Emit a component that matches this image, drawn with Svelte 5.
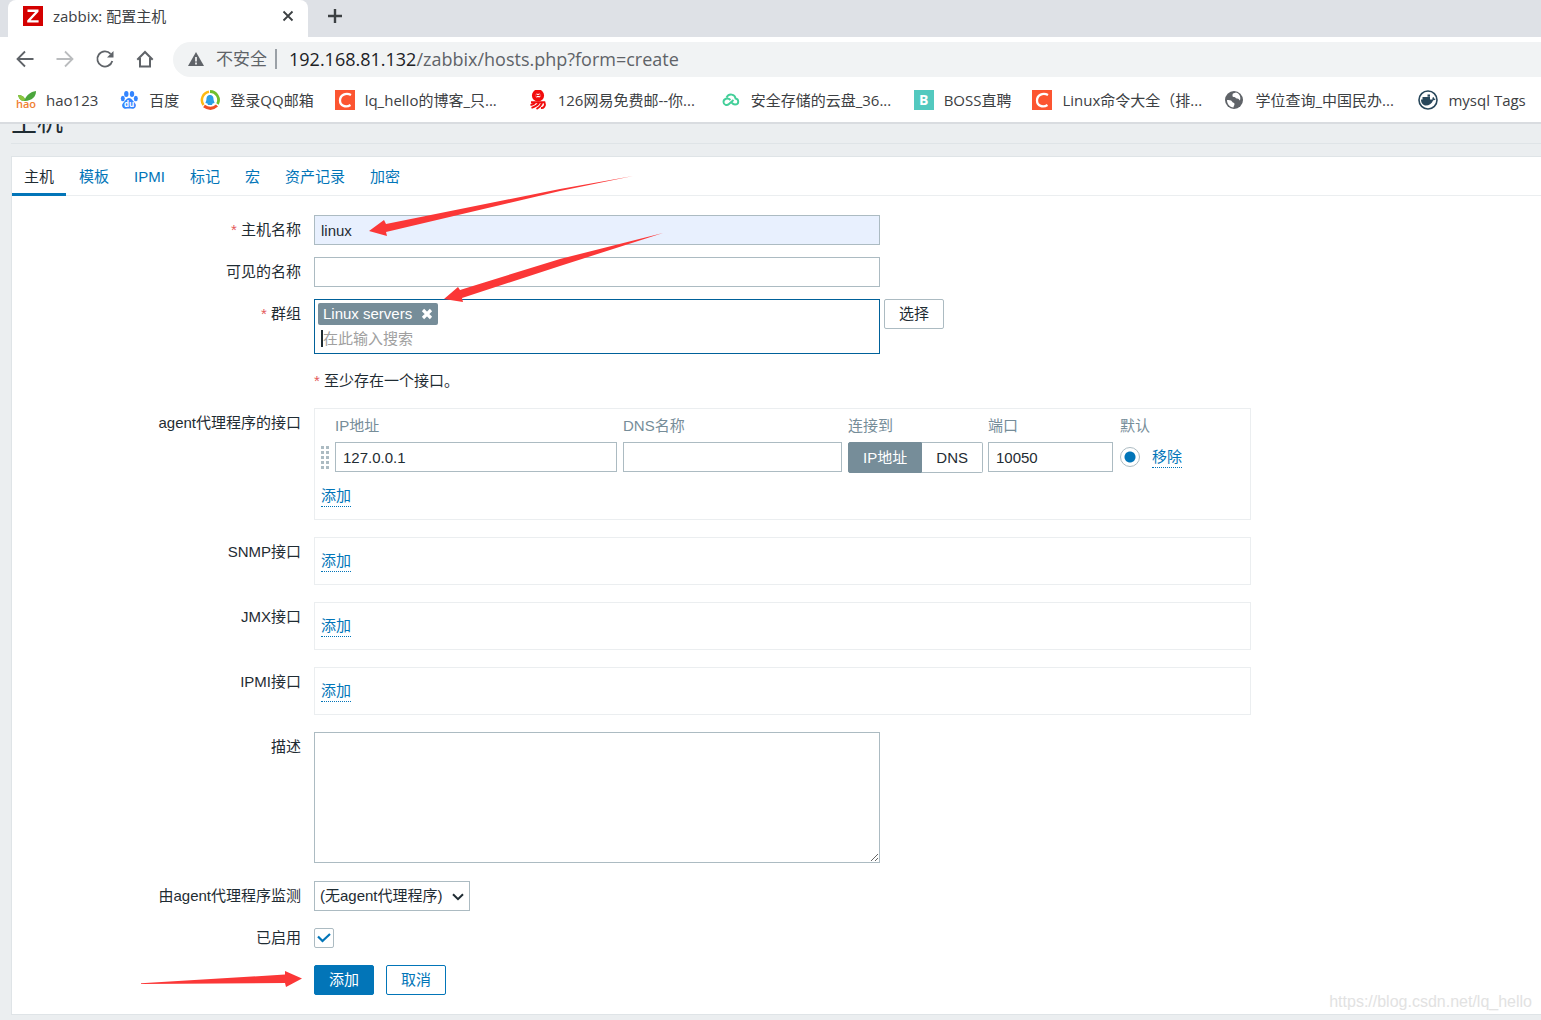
<script>
	const tabs = ['主机', '模板', 'IPMI', '标记', '宏', '资产记录', '加密']
	let activeTab = '主机'

	const bookmarks = [
		{icon: 'hao', title: 'hao123'},
		{icon: 'baidu', title: '百度'},
		{icon: 'qq', title: '登录QQ邮箱'},
		{icon: 'csdn', title: 'lq_hello的博客_只...', long: true},
		{icon: 'netease', title: '126网易免费邮--你...', long: true},
		{icon: 'cloud', title: '安全存储的云盘_36...', long: true},
		{icon: 'boss', title: 'BOSS直聘'},
		{icon: 'csdn', title: 'Linux命令大全（排...', long: true},
		{icon: 'globe', title: '学位查询_中国民办...', long: true},
		{icon: 'docker', title: 'mysql Tags'}
	]

	const otherInterfaces = ['SNMP接口', 'JMX接口', 'IPMI接口']

	let hostName = 'linux'
	let visibleName = ''
	let groups = ['Linux servers']
	let search = ''
	let ip = '127.0.0.1'
	let dns = ''
	let useIp = true
	let port = '10050'
	let description = ''
	let enabled = true

	const removeGroup = (group) =>
		groups = groups.filter((g) => g !== group)
</script>

<header class="browser">
	<div class="tab-strip">
		<div class="browser-tab">
			<svg width="20" height="20" viewBox="0 0 20 20">
				<rect width="20" height="20" fill="#d40000"/>
				<path d="M4.5 3.5h11v2.2L7.6 14.2h8v2.4H4.2v-2.2l7.9-8.5H4.5z" fill="#fff"/>
			</svg>
			<span class="tab-title">zabbix: 配置主机</span>
			<button class="plain" aria-label="关闭标签页">
				<svg width="12" height="12" viewBox="0 0 12 12"><path d="M1.5 1.5l9 9M10.5 1.5l-9 9" stroke="#3c4043" stroke-width="1.800"/></svg>
			</button>
		</div>
		<button class="plain new-tab" aria-label="新标签页">
			<svg width="16" height="16" viewBox="0 0 16 16"><path d="M8 1v14M1 8h14" stroke="#3c4043" stroke-width="2.4"/></svg>
		</button>
	</div>

	<div class="toolbar">
		<button class="plain" aria-label="后退">
			<svg width="20" height="20" viewBox="0 0 20 20"><path d="M18.500 10H3M10 2.500L2.500 10l7.500 7.500" fill="none" stroke="#5f6368" stroke-width="1.800"/></svg>
		</button>
		<button class="plain" aria-label="前进">
			<svg width="20" height="20" viewBox="0 0 20 20"><path d="M1.500 10H17M10 2.500l7.500 7.500-7.500 7.500" fill="none" stroke="#babcbe" stroke-width="1.800"/></svg>
		</button>
		<button class="plain" aria-label="重新加载">
			<svg width="20" height="20" viewBox="0 0 20 20">
				<path d="M17.300 12A7.600 7.600 0 1 1 15.600 4.800" fill="none" stroke="#5f6368" stroke-width="1.800"/>
				<path d="M18.500 2v6.500h-6.500z" fill="#5f6368"/>
			</svg>
		</button>
		<button class="plain" aria-label="主页">
			<svg width="20" height="20" viewBox="0 0 20 20"><path d="M2.300 10.800L10 3l7.700 7.800M5 9v8.600h10V9" fill="none" stroke="#5f6368" stroke-width="2"/></svg>
		</button>
		<div class="address">
			<svg width="16" height="16" viewBox="0 0 16 16">
				<path d="M8 1l8 14H0z" fill="#5f6368"/>
				<path d="M8 6v4.500M8 11.500v2" stroke="#fff" stroke-width="1.600"/>
			</svg>
			<span class="insecure">不安全</span>
			<span class="url"><b>192.168.81.132</b>/zabbix/hosts.php?form=create</span>
		</div>
	</div>

	<nav class="bookmarks">
		{#each bookmarks as bookmark}
			<a href="#bookmark" class:long={bookmark.long}>
				<svg width="20" height="20" viewBox="0 0 20 20">
					{#if bookmark.icon === 'hao'}
						<path d="M2 5c4 0 6 2 7 4C11 5 14 2 20 1c0 6-4 9.500-11 10C5 11 3 9 2 5z" fill="#4ba63c"/>
						<path d="M2 5c4 0 6 2 7 4l-1 2C5 11 3 9 2 5z" fill="#8cc63f"/>
						<text x="0" y="18" font-size="11" font-weight="600" fill="#f08031">hao</text>
					{:else if bookmark.icon === 'baidu'}
						<g fill="#3385ff">
							<ellipse cx="7.300" cy="4" rx="2.200" ry="3"/>
							<ellipse cx="13" cy="4" rx="2.200" ry="3"/>
							<ellipse cx="3.800" cy="8.500" rx="2" ry="2.700"/>
							<ellipse cx="16.800" cy="8.500" rx="2" ry="2.700"/>
							<path d="M10 8c2.500 0 3.500 2.500 5 4s2.500 3 1.500 5c-1 2.500-4 1.500-6.500 1.500S4.500 19.500 3.500 17c-1-2 0-3.500 1.500-5s2.500-4 5-4z"/>
						</g>
						<text x="5" y="17" font-size="8" font-weight="bold" fill="#fff">du</text>
					{:else if bookmark.icon === 'qq'}
						<circle cx="10" cy="10" r="9" fill="#fff"/>
						<path d="M3.500 15A8.400 8.400 0 0 1 9 1.800" fill="none" stroke="#fdb913" stroke-width="2.500"/>
						<path d="M10 1.500A8.500 8.500 0 0 1 17.500 14" fill="none" stroke="#70bf2b" stroke-width="2.800"/>
						<path d="M17 15.500Q11 21 4 16" fill="none" stroke="#f04e23" stroke-width="3"/>
						<path d="M10 5c3 0 3.600 2.500 3.600 5l1 3-2 .5-.6 1.500H8l-.6-1.500-2-.5 1-3C6.400 7.500 7 5 10 5z" fill="#2a9fe5"/>
					{:else if bookmark.icon === 'csdn'}
						<rect width="20" height="20" fill="#fc5531"/>
						<path d="M16 5C11 2.300 5 4.800 5 10.500c0 5.500 6 7.300 10.500 4.500" fill="none" stroke="#fff" stroke-width="2.300"/>
					{:else if bookmark.icon === 'netease'}
						<g fill="none" stroke="#f20d0d">
							<circle cx="10" cy="5.500" r="4.300" stroke-width="3.600"/>
							<path d="M7.800 5.500h4.400c0-2.600-4.400-2.600-4.400 0s2.700 2.200 4 1.700" stroke-width="1"/>
							<path d="M3 12.300h13.500c1.500 3.500-1 6-3.500 5.700M7.500 12c-1 1.800-3 2.800-5 3M11 13c-1.500 2.500-4 3.800-7.500 4.800M14 13c-1 3-3 4.500-5.500 6" stroke-width="1.900"/>
						</g>
					{:else if bookmark.icon === 'cloud'}
						<path d="M9.500 10C6.500 7 2.500 9 2.500 12s3.500 4 5.500 2L12.500 10M5.500 7.500C8 3 14 4 14.500 8.500c3.500.5 4 6-.5 6-2 0-3-1.500-4.500-3" fill="none" stroke="#43cf99" stroke-width="1.900"/>
					{:else if bookmark.icon === 'boss'}
						<rect width="20" height="20" fill="#53c9bf"/>
						<text x="5" y="15" font-size="14" font-weight="bold" fill="#fff">B</text>
					{:else if bookmark.icon === 'globe'}
						<circle cx="9" cy="10" r="9" fill="#5f6368"/>
						<path d="M8 3.500l3-1c4 1 5 5 4 8-1-.5-1-2-3-2s-1-2-3.500-1.500C7 7 7.500 4 8 3.500zM2 10c2 .3 4-.2 5 1.500s2.500 1 2.500 2.500-1 2-1 3.500C4.500 17 2 14 2 10z" fill="#fff"/>
					{:else}
						<circle cx="10" cy="10" r="9" fill="#fff" stroke="#28475b" stroke-width="1.600"/>
						<path d="M3 9.500h11.500c-.3-1 0-2 .6-2.500.8.4 1.100 1 1.200 1.700.6 0 1 .1 1.400.4-.5.9-1.400 1.200-2.500 1.200C13.500 14 11 15.500 8 15.500S3 13 3 9.500zM4.500 7h2.500v3H4.500zM7 7h2.500v3H7zM9.500 7H12v3H9.500zM9.500 4.500H12v2.200H9.500z" fill="#28475b"/>
					{/if}
				</svg>
				<span>{bookmark.title}</span>
			</a>
		{/each}
	</nav>
</header>

<main>
	<div class="page-title"><h1>主机</h1></div>

	<div class="card">
		<nav class="tabs">
			{#each tabs as tab}
				<a href="#{tab}" class:active={tab === activeTab} on:click={() => activeTab = tab}>{tab}</a>
			{/each}
		</nav>

		<form on:submit|preventDefault>
			<div class="row">
				<label class="required" for="host">主机名称</label>
				<input id="host" class="text wide autofill" bind:value={hostName}/>
			</div>
			<div class="row">
				<label for="visible">可见的名称</label>
				<input id="visible" class="text wide" bind:value={visibleName}/>
			</div>
			<div class="row">
				<label class="required" for="groups">群组</label>
				<div class="with-button">
					<div class="multiselect wide">
						{#each groups as group}
							<span class="tag">
								{group}
								<button type="button" class="plain" aria-label="移除" on:click={() => removeGroup(group)}>
									<svg width="12" height="12" viewBox="0 0 12 12"><path d="M2 2l8 8M10 2l-8 8" stroke="#fff" stroke-width="3.200"/></svg>
								</button>
							</span>
						{/each}
						<input id="groups" placeholder="在此输入搜索" bind:value={search}/>
					</div>
					<button type="button" class="btn grey">选择</button>
				</div>
			</div>
			<div class="row">
				<p class="note required">至少存在一个接口。</p>
			</div>

			<div class="row loose">
				<span class="label">agent代理程序的接口</span>
				<div class="panel">
					<table>
						<thead>
							<tr>
								<th class="drag"></th>
								<th class="ip">IP地址</th>
								<th class="dns">DNS名称</th>
								<th class="connect">连接到</th>
								<th class="port">端口</th>
								<th>默认</th>
							</tr>
						</thead>
						<tbody>
							<tr>
								<td>
									<svg class="handle" width="8" height="24" viewBox="0 0 8 24" fill="#acbbc2">
										{#each [1, 6, 11, 16, 21] as y}
											<rect x="0" {y} width="3" height="3"/>
											<rect x="5" {y} width="3" height="3"/>
										{/each}
									</svg>
								</td>
								<td><input class="text" aria-label="IP地址" bind:value={ip}/></td>
								<td><input class="text" aria-label="DNS名称" bind:value={dns}/></td>
								<td>
									<div class="segmented">
										<button type="button" class:on={useIp} on:click={() => useIp = true}>IP地址</button>
										<button type="button" class:on={!useIp} on:click={() => useIp = false}>DNS</button>
									</div>
								</td>
								<td><input class="text" aria-label="端口" bind:value={port}/></td>
								<td>
									<div class="default">
										<input type="radio" name="default" aria-label="默认" checked/>
										<a class="dotted" href="#remove">移除</a>
									</div>
								</td>
							</tr>
						</tbody>
					</table>
					<div class="add"><a class="dotted" href="#add">添加</a></div>
				</div>
			</div>

			{#each otherInterfaces as name}
				<div class="row loose">
					<span class="label">{name}</span>
					<div class="panel">
						<div class="add"><a class="dotted" href="#add">添加</a></div>
					</div>
				</div>
			{/each}

			<div class="row loose tall">
				<label for="description">描述</label>
				<textarea id="description" class="wide" bind:value={description}></textarea>
			</div>
			<div class="row">
				<label for="proxy">由agent代理程序监测</label>
				<div class="select">
					<select id="proxy">
						<option>(无agent代理程序)</option>
					</select>
					<svg width="12" height="8" viewBox="0 0 12 8"><path d="M1 1.200l5 5 5-5" fill="none" stroke="#1f2c33" stroke-width="2"/></svg>
				</div>
			</div>
			<div class="row">
				<label for="enabled">已启用</label>
				<div class="check">
					<input id="enabled" type="checkbox" bind:checked={enabled}/>
					{#if enabled}
						<svg width="14" height="10" viewBox="0 0 14 10"><path d="M1 3.500L5.500 8 13 1" fill="none" stroke="#0275b8" stroke-width="2.200"/></svg>
					{/if}
				</div>
			</div>
			<div class="row">
				<div class="buttons">
					<button class="btn primary">添加</button>
					<button type="button" class="btn">取消</button>
				</div>
			</div>
		</form>
		<span class="watermark">https://blog.csdn.net/lq_hello</span>
	</div>
</main>

<svg class="arrows" width="700" height="1000" viewBox="0 0 700 1000" fill="#fb3737">
	<path d="M369 231L384 220l2 4L560 189l73-13-73 15-174 41 1 4z"/>
	<path d="M444 299l14-12 2 3 100-31 103-26-103 33-98 32 1 4z"/>
	<path d="M141 983.300L285 974.500V971l17 7.500-16 8.500-1-4-144 1z"/>
</svg>

<style>
	:global(body) {
		background: #ebeef0;
		color: #1f2c33;
		font: 15px/20px "Liberation Sans", "Noto Sans CJK SC", sans-serif;
	}

	a {
		color: #0275b8;
		text-decoration: none;
	}

	button, input, select, textarea {
		box-sizing: border-box;
		margin: 0;
		color: inherit;
		font: inherit;
	}

	.plain {
		display: flex;
		padding: 0;
		border: 0;
		background: none;
	}

	/* browser window */
	.browser {
		background: #fff;
		border-bottom: 2px solid #d9dce0;
		color: #3c4043;
		font-family: "Open Sans", "Noto Sans CJK SC", sans-serif;
	}

	.tab-strip {
		display: flex;
		align-items: center;
		height: 37px;
		padding-left: 8px;
		background: #dee1e6;
	}

	.browser-tab {
		display: flex;
		align-items: center;
		box-sizing: border-box;
		width: 300px;
		height: 37px;
		padding: 0 14px 5px 15px;
		background: #fff;
		border-radius: 8px 8px 0 0;
	}

	.tab-title {
		flex: 1;
		margin-left: 10px;
	}

	.new-tab {
		margin: 0 0 5px 19px;
	}

	.toolbar {
		display: flex;
		align-items: center;
		gap: 20px;
		height: 44px;
		padding-left: 15px;
	}

	.address {
		display: flex;
		flex: 1;
		align-items: center;
		height: 35px;
		margin-left: -2px;
		padding-left: 15px;
		background: #f1f3f4;
		border-radius: 18px 0 0 18px;
		font-size: 18px;
	}

	.insecure {
		margin-left: 12px;
		padding-right: 8px;
		border-right: 2px solid #9aa0a6;
		color: #5f6368;
		font-size: 17px;
	}

	.url {
		margin-left: 12px;
		color: #5f6368;
	}

	.url b {
		color: #202124;
		font-weight: normal;
	}

	.bookmarks {
		display: flex;
		align-items: center;
		gap: 21px;
		height: 38px;
		padding: 0 0 3px 16px;
		overflow: hidden;
	}

	.bookmarks a {
		display: flex;
		flex: none;
		align-items: center;
		gap: 10px;
		color: #3c4043;
		white-space: nowrap;
	}

	.bookmarks .long {
		width: 172px;
	}

	/* page */
	main {
		padding: 0 0 5px 11px;
	}

	.page-title {
		display: flex;
		align-items: flex-end;
		height: 19px;
		overflow: hidden;
		border-bottom: 1px solid #dfe4e7;
	}

	h1 {
		margin: 0 0 5px;
		font-size: 26px;
		font-weight: 400;
		line-height: 32px;
	}

	.card {
		position: relative;
		margin-top: 12px;
		background: #fff;
		border: 1px solid #dfe4e7;
		border-right: 0;
	}

	.tabs {
		display: flex;
		gap: 1px;
		border-bottom: 1px solid #ebeef0;
	}

	.tabs a {
		height: 28px;
		padding: 10px 12px 0;
	}

	.tabs .active {
		height: 26px;
		margin-bottom: -1px;
		border-bottom: 3px solid #0275b8;
		color: #1f2c33;
	}

	form {
		display: flex;
		flex-direction: column;
		gap: 12px;
		padding: 19px 0;
	}

	.row {
		display: grid;
		grid-template-columns: 289px minmax(0, 1fr);
		column-gap: 13px;
		min-height: 30px;
	}

	.loose {
		margin-bottom: 5px;
	}

	.tall {
		min-height: 132px;
	}

	.row > * {
		grid-column: 2;
	}

	.row > label, .label {
		grid-column: 1;
		line-height: 30px;
		text-align: right;
	}

	.required::before {
		content: "* ";
		color: #e45959;
	}

	.note {
		margin: 0;
		line-height: 30px;
	}

	.wide {
		width: 100%;
		max-width: 566px;
	}

	.text {
		height: 30px;
		padding: 0 6px;
		background: #fff;
		border: 1px solid #acbbc2;
		outline: none;
	}

	.autofill {
		background: #e8f0fe;
	}

	.with-button {
		display: flex;
		align-items: flex-start;
		gap: 4px;
	}

	.multiselect {
		box-sizing: border-box;
		height: 55px;
		padding: 3px;
		border: 1px solid #00619a;
	}

	.tag {
		display: flex;
		align-items: center;
		gap: 9px;
		width: max-content;
		height: 22px;
		padding: 0 5px;
		background: #768d99;
		border-radius: 2px;
		color: #fff;
	}

	.multiselect input {
		display: block;
		width: 90%;
		height: 17px;
		margin: 5px 0 0 3px;
		padding: 0;
		border: 0;
		border-left: 2px solid #1f2c33;
		line-height: 17px;
		outline: none;
	}

	.multiselect input::placeholder {
		color: #a0a0a0;
	}

	.btn {
		width: 60px;
		height: 30px;
		padding: 0;
		background: #fff;
		border: 1px solid #0275b8;
		border-radius: 2px;
		color: #0275b8;
	}

	.grey {
		border-color: #acbbc2;
		color: #1f2c33;
	}

	.primary {
		background: #0275b8;
		color: #fff;
	}

	.panel {
		box-sizing: border-box;
		max-width: 937px;
		padding: 0 6px;
		border: 1px solid #ebeef0;
	}

	table {
		width: 100%;
		padding-top: 5px;
		border-spacing: 0;
		table-layout: fixed;
	}

	th {
		padding: 0;
		color: #768d99;
		font-weight: normal;
		line-height: 24px;
		text-align: left;
	}

	td {
		height: 31px;
		padding: 4px 6px 0 0;
		vertical-align: top;
	}

	td .text {
		display: block;
		width: 100%;
		padding: 0 7px;
	}

	.drag {
		width: 14px;
	}

	.ip {
		width: 288px;
	}

	.dns {
		width: 225px;
	}

	.connect {
		width: 140px;
	}

	.port {
		width: 132px;
	}

	td:nth-child(4) {
		padding-right: 5px;
	}

	td:nth-child(5) {
		padding-right: 7px;
	}

	.handle {
		display: block;
		margin-top: 3px;
	}

	.segmented {
		display: flex;
		height: 31px;
	}

	.segmented button {
		flex: 1 0 auto;
		padding: 0 14px;
		background: #fff;
		border: 1px solid #acbbc2;
		border-left: 0;
		border-radius: 0 2px 2px 0;
	}

	.segmented button:first-child {
		border-left: 1px solid #acbbc2;
		border-radius: 2px 0 0 2px;
	}

	.segmented .on, .segmented .on:first-child {
		background: #768d99;
		border-color: #768d99;
		color: #fff;
	}

	.default {
		display: flex;
		align-items: center;
		gap: 12px;
		height: 30px;
	}

	input[type=radio] {
		width: 20px;
		height: 20px;
		appearance: none;
		background: radial-gradient(circle, #0275b8 5px, #fff 6px);
		border: 1px solid #acbbc2;
		border-radius: 50%;
	}

	.dotted {
		display: inline-block;
		border-bottom: 1px dotted #0275b8;
	}

	.add {
		display: flex;
		padding: 13px 0 12px;
	}

	textarea {
		height: 131px;
		border: 1px solid #acbbc2;
		outline: none;
	}

	.select {
		position: relative;
		width: 156px;
	}

	select {
		width: 100%;
		height: 30px;
		padding: 0 5px;
		appearance: none;
		background: #fff;
		border: 1px solid #acbbc2;
		border-radius: 0;
	}

	.select svg {
		position: absolute;
		top: 12px;
		right: 6px;
		pointer-events: none;
	}

	.check {
		position: relative;
		display: flex;
		align-items: center;
	}

	input[type=checkbox] {
		width: 20px;
		height: 20px;
		appearance: none;
		background: #fff;
		border: 1px solid #acbbc2;
		border-radius: 2px;
	}

	.check svg {
		position: absolute;
		left: 3px;
		pointer-events: none;
	}

	.buttons {
		display: flex;
		gap: 12px;
	}

	.watermark {
		position: absolute;
		right: 9px;
		bottom: 2px;
		color: #e2e2e2;
		font-size: 16px;
	}

	.arrows {
		position: absolute;
		top: 0;
		left: 0;
		pointer-events: none;
	}
</style>
